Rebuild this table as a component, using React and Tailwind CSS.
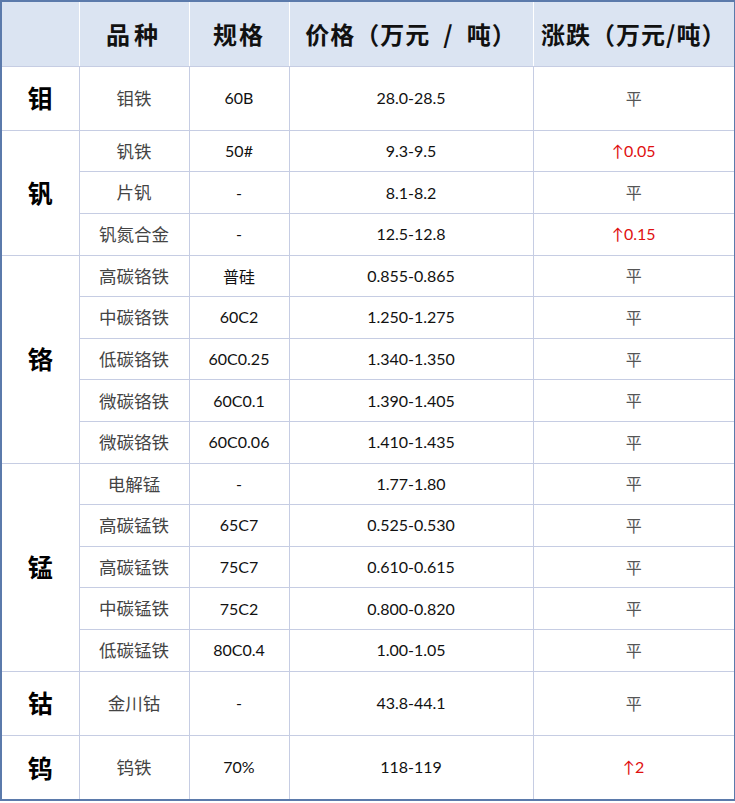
const groups = [
  { name: "钼", h: 64, rows: [["钼铁", "60B", "28.0-28.5", null]] },
  {
    name: "钒",
    h: 41.7,
    rows: [
      ["钒铁", "50#", "9.3-9.5", "0.05"],
      ["片钒", "-", "8.1-8.2", null],
      ["钒氮合金", "-", "12.5-12.8", "0.15"],
    ],
  },
  {
    name: "铬",
    h: 41.6,
    rows: [
      ["高碳铬铁", "普硅", "0.855-0.865", null],
      ["中碳铬铁", "60C2", "1.250-1.275", null],
      ["低碳铬铁", "60C0.25", "1.340-1.350", null],
      ["微碳铬铁", "60C0.1", "1.390-1.405", null],
      ["微碳铬铁", "60C0.06", "1.410-1.435", null],
    ],
  },
  {
    name: "锰",
    h: 41.6,
    rows: [
      ["电解锰", "-", "1.77-1.80", null],
      ["高碳锰铁", "65C7", "0.525-0.530", null],
      ["高碳锰铁", "75C7", "0.610-0.615", null],
      ["中碳锰铁", "75C2", "0.800-0.820", null],
      ["低碳锰铁", "80C0.4", "1.00-1.05", null],
    ],
  },
  { name: "钴", h: 64, rows: [["金川钴", "-", "43.8-44.1", null]] },
  { name: "钨", h: 65, rows: [["钨铁", "70%", "118-119", "2"]] },
]

const cjk = "font-['Noto_Sans_CJK_SC',sans-serif]"
const num = "font-['Lato','Noto_Sans_CJK_SC',sans-serif]"
const cell = "border border-[#c6cde3] text-center align-middle p-0"
const head = `${cjk} text-[24px] font-bold text-[#111] whitespace-nowrap`

export default function App() {
  return (
    <div className="bg-white w-[735px] h-[803px]">
      <table className="table-fixed border-collapse w-[734px] border-2 border-[#5b7aab]">
        <colgroup>
          <col className="w-[78px]" />
          <col className="w-[110px]" />
          <col className="w-[100px]" />
          <col className="w-[244px]" />
          <col className="w-[202px]" />
        </colgroup>
        <thead>
          <tr className="h-[65px] bg-[#dbe4f2]">
            <th className={`${cell} border-r-white`}></th>
            <th className={`${cell} border-x-white ${head} tracking-[4px]`}>品种</th>
            <th className={`${cell} border-x-white ${head} tracking-[2px]`}>规格</th>
            <th className={`${cell} border-x-white ${head} tracking-[1px]`}>
              价格（万元{"\u2002"}/{"\u2002"}吨）
            </th>
            <th className={`${cell} border-l-white ${head} tracking-[1px]`}>涨跌（万元/吨）</th>
          </tr>
        </thead>
        <tbody>
          {groups.map((g) =>
            g.rows.map((r, i) => (
              <tr key={g.name + i} style={{ height: g.h }}>
                {i === 0 && (
                  <td rowSpan={g.rows.length} className={`${cell} ${cjk} text-[25px] font-bold text-black`}>
                    {g.name}
                  </td>
                )}
                <td className={`${cell} ${cjk} text-[17.5px] text-[#444]`}>{r[0]}</td>
                <td className={`${cell} ${/[0-9-]/.test(r[1]) ? num : cjk} text-[16px] text-[#111]`}>{r[1]}</td>
                <td className={`${cell} ${num} text-[16px] text-[#111]`}>{r[2]}</td>
                <td className={`${cell} text-[16px]`}>
                  {r[3] ? (
                    <span className={`${num} text-[#e01010]`}>↑{r[3]}</span>
                  ) : (
                    <span className={`${cjk} text-[#555]`}>平</span>
                  )}
                </td>
              </tr>
            ))
          )}
        </tbody>
      </table>
    </div>
  )
}
